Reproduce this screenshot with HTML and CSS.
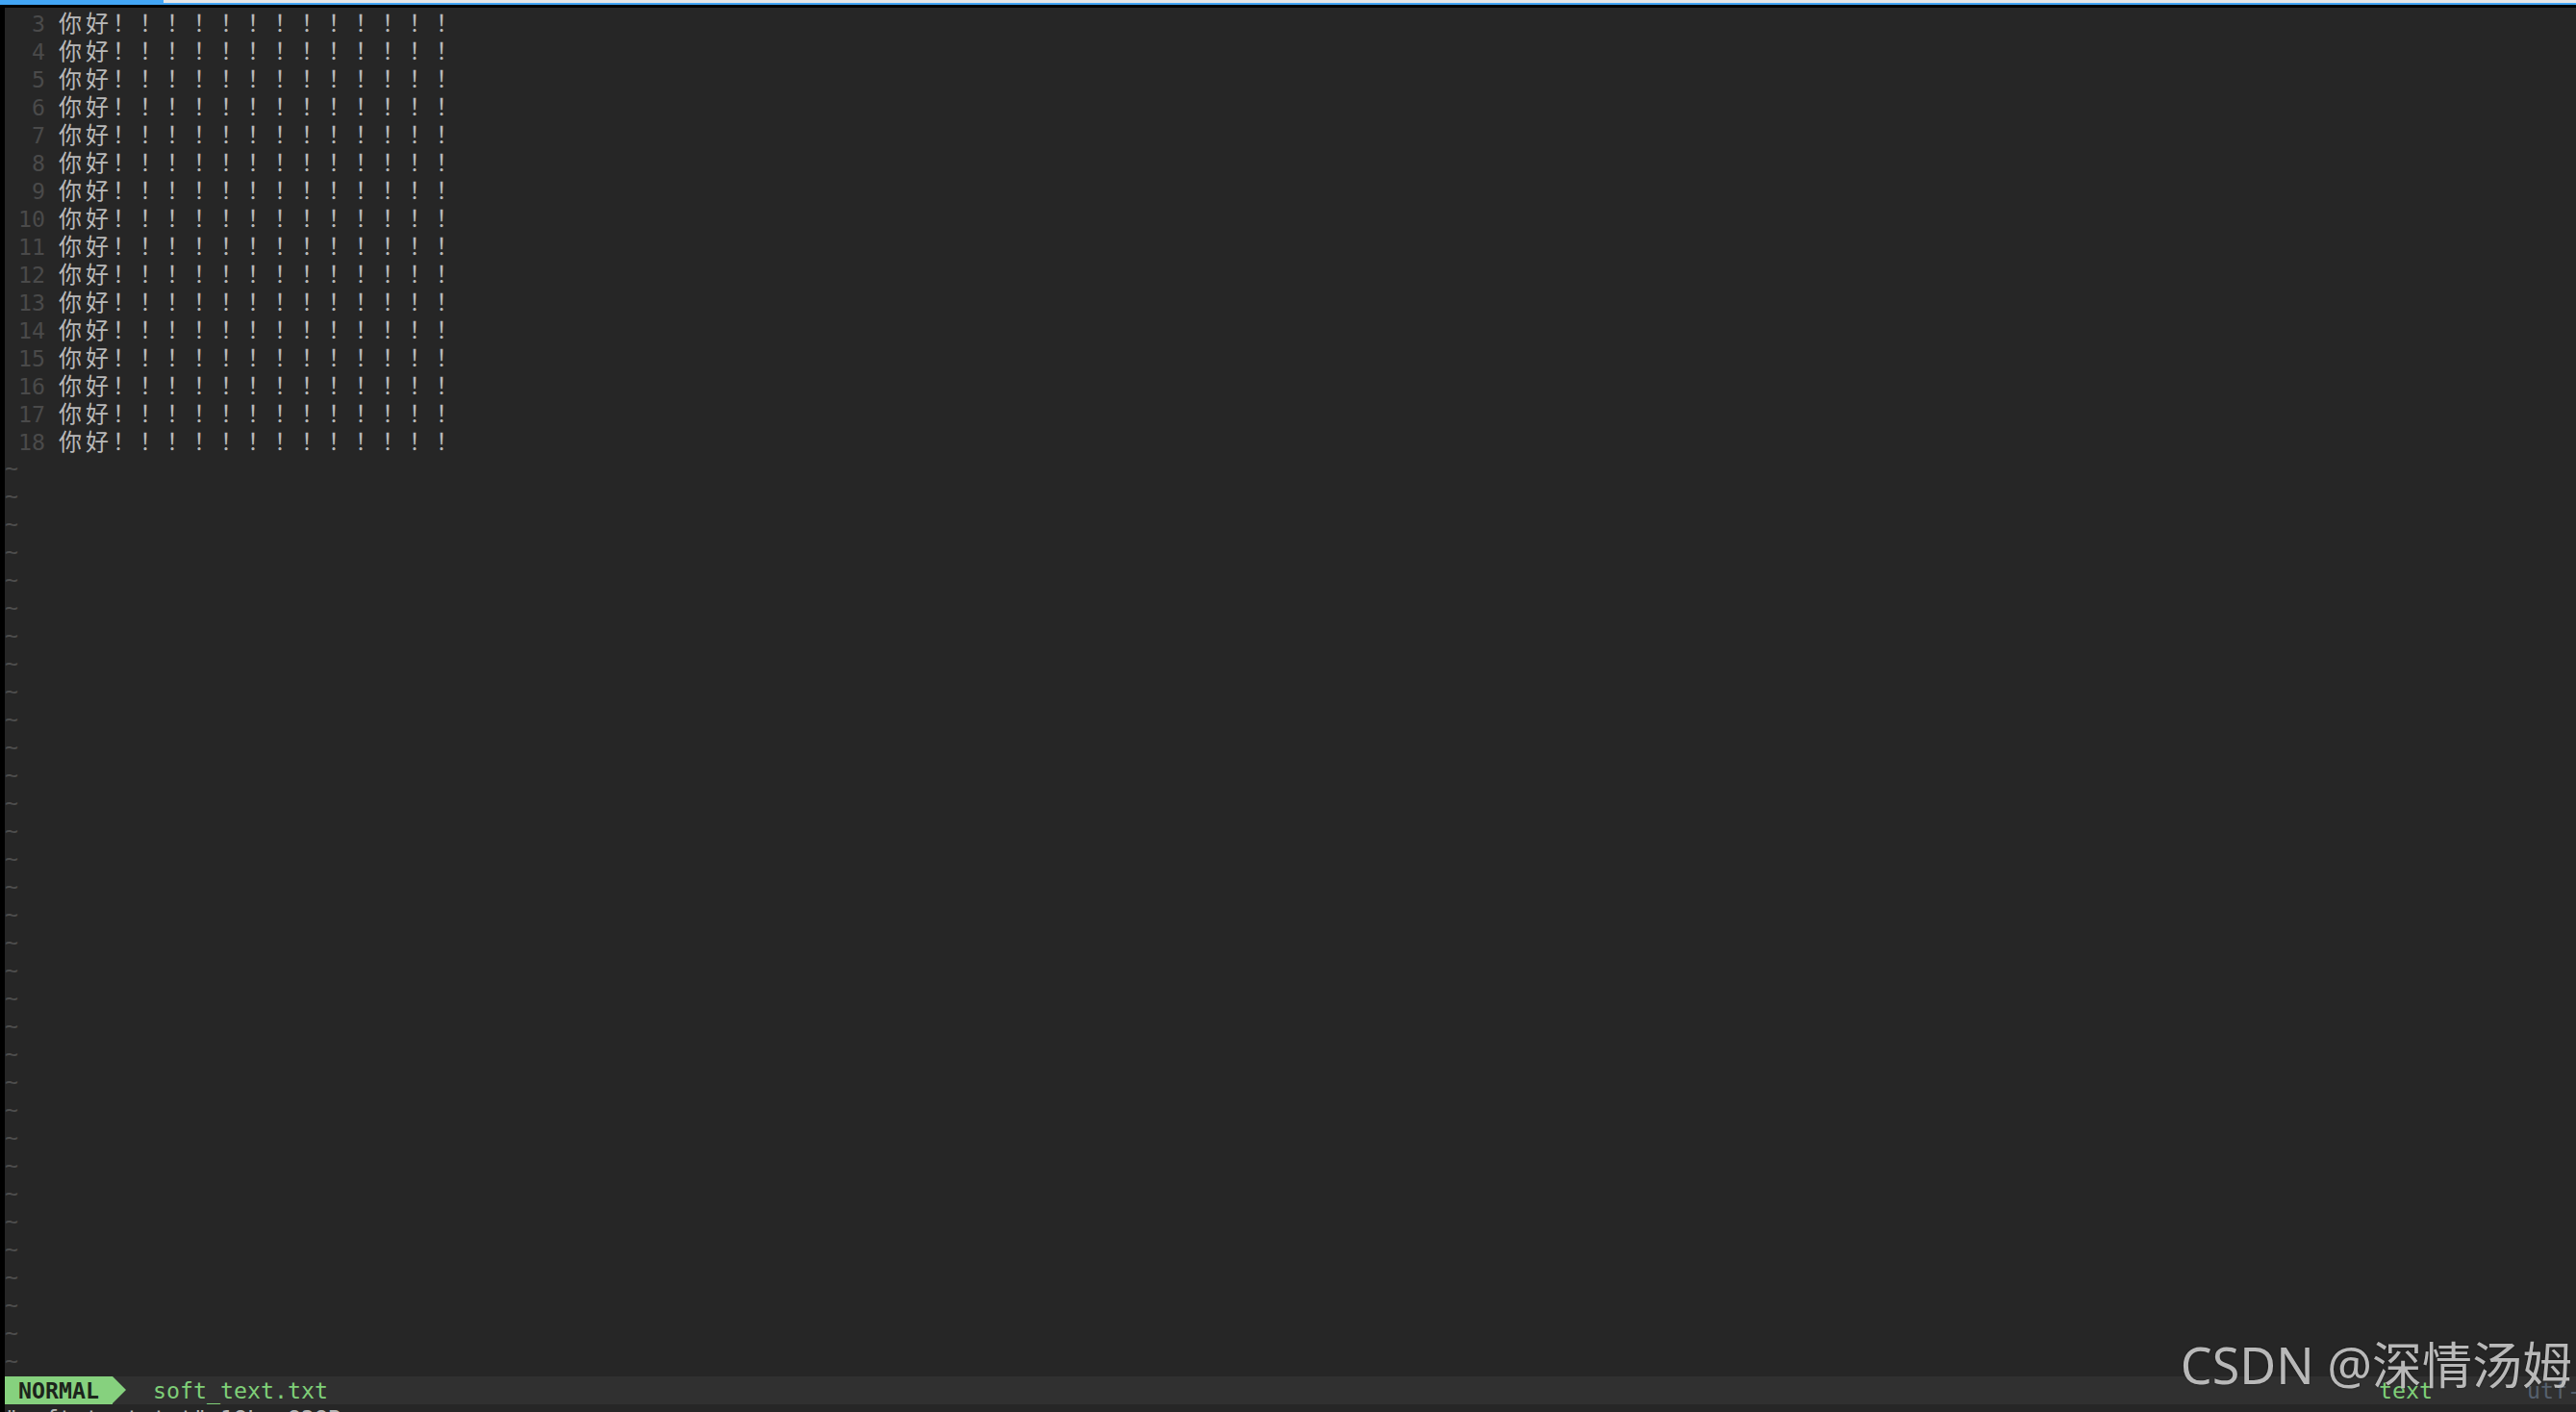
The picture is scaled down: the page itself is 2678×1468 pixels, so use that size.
FILE: index.html
```html
<!DOCTYPE html>
<html>
<head>
  <meta charset='utf-8'>
  <title>soft_text.txt - VIM</title>
<link rel="stylesheet" href="styles.css">
</head>
<body>
  <div class="tabbar"><div class="tab-active"></div></div>
  <div class="accent"></div>
  <div class="screen">
    <div class="buffer">
      <div class="line"><span class="num">3</span><span class="txt">你好！！！！！！！！！！！！！</span></div>
      <div class="line"><span class="num">4</span><span class="txt">你好！！！！！！！！！！！！！</span></div>
      <div class="line"><span class="num">5</span><span class="txt">你好！！！！！！！！！！！！！</span></div>
      <div class="line"><span class="num">6</span><span class="txt">你好！！！！！！！！！！！！！</span></div>
      <div class="line"><span class="num">7</span><span class="txt">你好！！！！！！！！！！！！！</span></div>
      <div class="line"><span class="num">8</span><span class="txt">你好！！！！！！！！！！！！！</span></div>
      <div class="line"><span class="num">9</span><span class="txt">你好！！！！！！！！！！！！！</span></div>
      <div class="line"><span class="num">10</span><span class="txt">你好！！！！！！！！！！！！！</span></div>
      <div class="line"><span class="num">11</span><span class="txt">你好！！！！！！！！！！！！！</span></div>
      <div class="line"><span class="num">12</span><span class="txt">你好！！！！！！！！！！！！！</span></div>
      <div class="line"><span class="num">13</span><span class="txt">你好！！！！！！！！！！！！！</span></div>
      <div class="line"><span class="num">14</span><span class="txt">你好！！！！！！！！！！！！！</span></div>
      <div class="line"><span class="num">15</span><span class="txt">你好！！！！！！！！！！！！！</span></div>
      <div class="line"><span class="num">16</span><span class="txt">你好！！！！！！！！！！！！！</span></div>
      <div class="line"><span class="num">17</span><span class="txt">你好！！！！！！！！！！！！！</span></div>
      <div class="line"><span class="num">18</span><span class="txt">你好！！！！！！！！！！！！！</span></div>
      <div class="line tilde">~</div>
      <div class="line tilde">~</div>
      <div class="line tilde">~</div>
      <div class="line tilde">~</div>
      <div class="line tilde">~</div>
      <div class="line tilde">~</div>
      <div class="line tilde">~</div>
      <div class="line tilde">~</div>
      <div class="line tilde">~</div>
      <div class="line tilde">~</div>
      <div class="line tilde">~</div>
      <div class="line tilde">~</div>
      <div class="line tilde">~</div>
      <div class="line tilde">~</div>
      <div class="line tilde">~</div>
      <div class="line tilde">~</div>
      <div class="line tilde">~</div>
      <div class="line tilde">~</div>
      <div class="line tilde">~</div>
      <div class="line tilde">~</div>
      <div class="line tilde">~</div>
      <div class="line tilde">~</div>
      <div class="line tilde">~</div>
      <div class="line tilde">~</div>
      <div class="line tilde">~</div>
      <div class="line tilde">~</div>
      <div class="line tilde">~</div>
      <div class="line tilde">~</div>
      <div class="line tilde">~</div>
      <div class="line tilde">~</div>
      <div class="line tilde">~</div>
      <div class="line tilde">~</div>
      <div class="line tilde">~</div>
    </div>
    <div class="statusline">
      <div class="status-left">
        <span class="mode">NORMAL</span><span class="mode-arrow"></span>
        <span class="filename">soft_text.txt</span>
      </div>
      <div class="status-right">
        <span class="filetype">text</span>
        <span class="encoding">utf-8</span>
      </div>
    </div>
    <div class="cmdline">"soft_text.txt" 18L, 828B</div>
  </div>
  <div class="watermark">CSDN @深情汤姆</div>
</body>
</html>
```

FILE: styles.css
```css
html {
  overflow: hidden;
}
body {
  margin: 0;
  background: #000;
  font-family: "DejaVu Sans Mono", "Noto Sans CJK SC", monospace;
  font-size: 23.25px;
  color: #b6b6b6;
}
.tabbar {
  height: 3px;
  background: #e6e6e6;
}
.tab-active {
  width: 170px;
  height: 3px;
  background: #42a5f5;
}
.accent {
  height: 2px;
  background: #42a5f5;
  margin-bottom: 5px;
}
.screen {
  margin-left: 5px;
  background: #262626;
}
.buffer {
  margin-top: -2px;
  padding-bottom: 2px;
}
.line {
  height: 29px;
  line-height: 29px;
  white-space: pre;
}
.num {
  display: inline-block;
  width: 42px;
  padding-right: 14px;
  text-align: right;
  color: #4a4a4a;
}
.txt {
  font-family: "Noto Sans CJK SC", sans-serif;
  font-size: 24px;
  letter-spacing: 4px;
  color: #b8b8b8;
}
.tilde {
  color: #4d4d4d;
}
.statusline {
  display: flex;
  height: 29px;
  line-height: 29px;
  background: #303030;
  white-space: pre;
  overflow: hidden;
}
.status-left {
  display: flex;
  flex-shrink: 0;
  width: 2468px;
}
.mode {
  width: 84px;
  padding: 0 14px;
  background: #86d17e;
  color: #1c241b;
  font-weight: bold;
}
.mode-arrow {
  width: 0;
  height: 0;
  border-top: 14.5px solid transparent;
  border-bottom: 14.5px solid transparent;
  border-left: 14px solid #86d17e;
  margin-right: 28px;
}
.filename {
  color: #7fcf78;
}
.status-right {
  display: flex;
  flex-shrink: 0;
  gap: 98px;
}
.filetype {
  color: #7fcf78;
}
.encoding {
  color: #56606e;
}
.cmdline {
  height: 29px;
  line-height: 29px;
  white-space: pre;
  color: #b6b6b6;
}
.watermark {
  position: absolute;
  right: 4px;
  top: 1386px;
  font-family: "Noto Sans", "Noto Sans CJK SC", sans-serif;
  font-size: 52px;
  line-height: 66px;
  color: rgba(214, 214, 214, 0.85);
  text-shadow: 0 0 2px rgba(0, 0, 0, 0.6);
}
```
